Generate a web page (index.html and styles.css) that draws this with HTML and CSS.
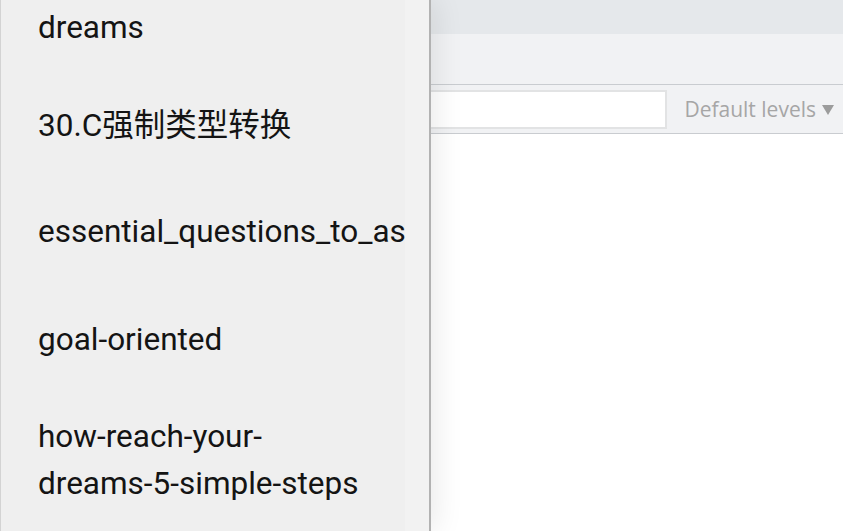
FILE: index.html
```html
<!DOCTYPE html>
<html lang="en">
<head>
<meta charset="utf-8">
<title>Console</title>
<link rel="stylesheet" href="styles.css">
</head>
<body>
<div class="app">
  <div class="topbar"></div>
  <div class="tabs"></div>
  <div class="toolbar">
    <div class="filter"></div>
    <div class="levels">Default levels <svg class="caret" width="12" height="10" viewBox="0 0 12 10"><path d="M0 0 H12 L6 10 Z" fill="#9c9c9c"/></svg></div>
  </div>
  <div class="console"></div>

  <aside class="drawer">
    <div class="list">
      <div class="item">dreams</div>
      <div class="item">30.C强制类型转换</div>
      <div class="item gap-b">essential_questions_to_as</div>
      <div class="item gap-c">goal-oriented</div>
      <div class="item gap-d">how-reach-your-dreams-5-simple-steps</div>
    </div>
    <div class="track"></div>
  </aside>
</div>
</body>
</html>
```

FILE: styles.css
```css
html, body {
  margin: 0;
  padding: 0;
  height: 100%;
  overflow: hidden;
}
body {
  background: #ffffff;
  font-family: "Open Sans", "Liberation Sans", sans-serif;
}
.app {
  position: relative;
  display: flex;
  flex-direction: column;
  height: 100%;
}
.topbar {
  height: 34px;
  background: #e5e8eb;
}
.tabs {
  height: 50px;
  background: #f1f2f4;
  border-bottom: 1px solid #c9ccd0;
}
.toolbar {
  height: 49px;
  box-sizing: border-box;
  background: #f1f2f4;
  border-bottom: 1px solid #c9ccd0;
  display: flex;
  align-items: center;
  padding: 0 9px 0 200px;
}
.filter {
  flex: 1;
  height: 39px;
  box-sizing: border-box;
  background: #ffffff;
  border: 2px solid #e2e3e4;
}
.levels {
  margin-left: 17px;
  display: flex;
  align-items: center;
  gap: 6px;
  font-size: 21px;
  color: #a6a6a6;
  white-space: nowrap;
}
.caret {
  display: block;
  margin-top: 1px;
}
.console {
  flex: 1;
  background: #ffffff;
}
.drawer {
  position: absolute;
  left: 0;
  top: 0;
  bottom: 0;
  width: 431px;
  box-sizing: border-box;
  display: flex;
  background: #efefef;
  border-left: 1px solid #d3d3d3;
  border-right: 2px solid #b2b2b2;
  box-shadow: 4px 0 28px rgba(0, 0, 0, 0.09);
  font-family: Roboto, "Noto Sans CJK SC", sans-serif;
}
.list {
  width: 404px;
  overflow: hidden;
  display: flex;
  flex-direction: column;
  padding-top: 4px;
}
.track {
  flex: 1;
  background: #f2f2f2;
}
.item {
  padding: 0 36px 0 37px;
  font-size: 31.5px;
  line-height: 47px;
  color: #141414;
  white-space: normal;
}
.item + .item {
  margin-top: 51px;
}
.item.gap-b {
  margin-top: 59px;
}
.item.gap-c {
  margin-top: 61px;
}
.item.gap-d {
  margin-top: 50px;
}
```
